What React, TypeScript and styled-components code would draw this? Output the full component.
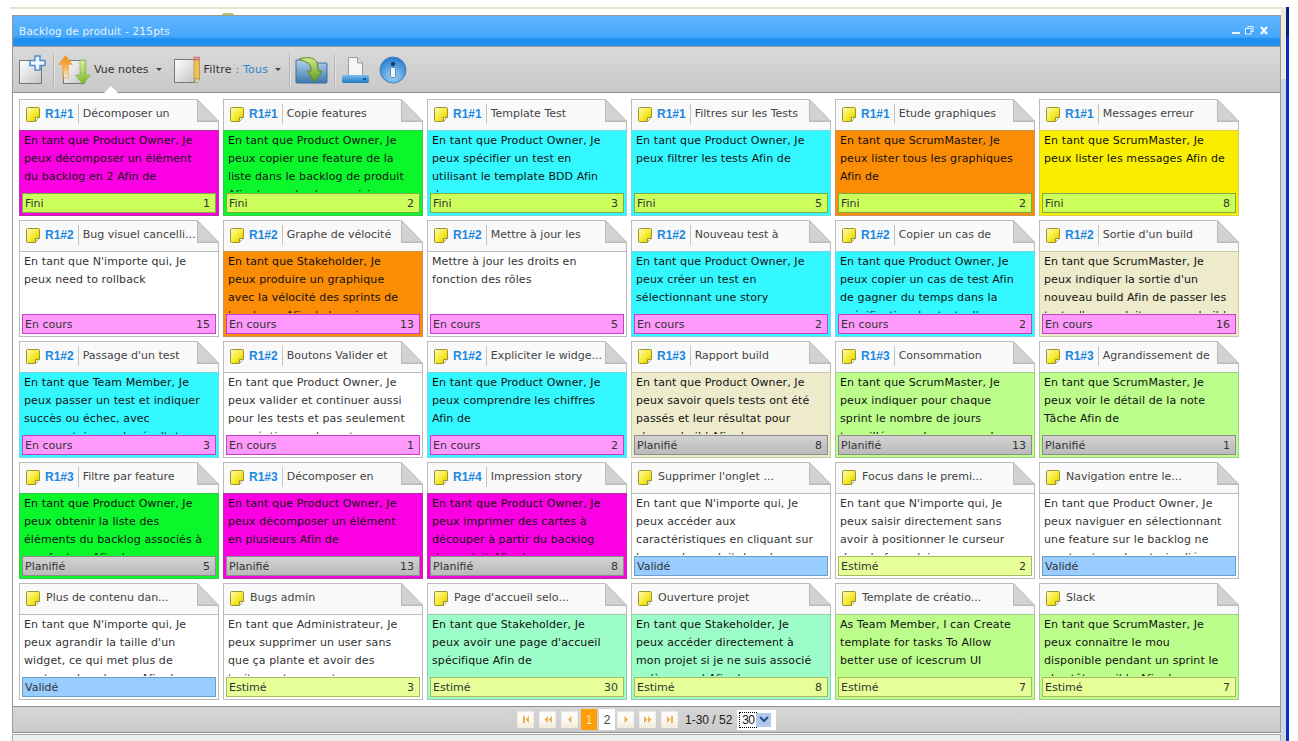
import React from 'react'
import styled, { createGlobalStyle } from 'styled-components'

type Status = 'fini' | 'cours' | 'planifie' | 'valide' | 'estime'
type Story = { id?: string; title: string; color: string; text: string; status: Status; pts?: number }

const FONT = `"DejaVu Sans", Verdana, sans-serif`

const MAGENTA = 'magenta'
const GREEN = 'green'
const CYAN = 'cyan'
const ORANGE = 'orange'
const YELLOW = 'yellow'
const WHITE = 'white'
const BEIGE = 'beige'
const LIME = 'lime'
const MINT = 'mint'

const stickyColors: Record<string, { bg: string; line: string }> = {
  magenta: { bg: '#fc00e4', line: '#b4309f' },
  green: { bg: '#0af72c', line: '#38c84c' },
  cyan: { bg: '#33f8ff', line: '#74d8e8' },
  orange: { bg: '#fb8c06', line: '#c89548' },
  yellow: { bg: '#faee00', line: '#d8d050' },
  white: { bg: '#ffffff', line: '#bbbbbb' },
  beige: { bg: '#edebcc', line: '#c8c8a8' },
  lime: { bg: '#bdfd8c', line: '#a4cc88' },
  mint: { bg: '#9dfdc8', line: '#98ccac' },
}

const statusLabels: Record<Status, string> = {
  fini: 'Fini',
  cours: 'En cours',
  planifie: 'Planifié',
  valide: 'Validé',
  estime: 'Estimé',
}

const statusColors: Record<Status, { bg: string; line: string }> = {
  fini: { bg: '#ccff5c', line: '#7cad45' },
  cours: { bg: '#ff99fb', line: '#c43fc8' },
  planifie: { bg: 'linear-gradient(#d2d2d2, #bababa)', line: '#8c8c8c' },
  valide: { bg: '#99ccff', line: '#6a9fc9' },
  estime: { bg: '#e6ff99', line: '#a9bb62' },
}

const stories: Story[] = [
  { id: 'R1#1', title: 'Décomposer un', color: MAGENTA, status: 'fini', pts: 1, text: 'En tant que Product Owner, Je\npeux décomposer un élément\ndu backlog en 2 Afin de' },
  { id: 'R1#1', title: 'Copie features', color: GREEN, status: 'fini', pts: 2, text: 'En tant que Product Owner, Je\npeux copier une feature de la\nliste dans le backlog de produit\nAfin de ne plus la ressaisir' },
  { id: 'R1#1', title: 'Template Test', color: CYAN, status: 'fini', pts: 3, text: 'En tant que Product Owner, Je\npeux spécifier un test en\nutilisant le template BDD Afin\nde' },
  { id: 'R1#1', title: 'Filtres sur les Tests', color: CYAN, status: 'fini', pts: 5, text: 'En tant que Product Owner, Je\npeux filtrer les tests Afin de' },
  { id: 'R1#1', title: 'Etude graphiques', color: ORANGE, status: 'fini', pts: 2, text: 'En tant que ScrumMaster, Je\npeux lister tous les graphiques\nAfin de' },
  { id: 'R1#1', title: 'Messages erreur', color: YELLOW, status: 'fini', pts: 8, text: 'En tant que ScrumMaster, Je\npeux lister les messages Afin de' },

  { id: 'R1#2', title: 'Bug visuel cancelli...', color: WHITE, status: 'cours', pts: 15, text: "En tant que N'importe qui, Je\npeux need to rollback" },
  { id: 'R1#2', title: 'Graphe de vélocité', color: ORANGE, status: 'cours', pts: 13, text: 'En tant que Stakeholder, Je\npeux produire un graphique\navec la vélocité des sprints de\nla release Afin de la suivre' },
  { id: 'R1#2', title: 'Mettre à jour les', color: WHITE, status: 'cours', pts: 5, text: 'Mettre à jour les droits en\nfonction des rôles' },
  { id: 'R1#2', title: 'Nouveau test à', color: CYAN, status: 'cours', pts: 2, text: 'En tant que Product Owner, Je\npeux créer un test en\nsélectionnant une story' },
  { id: 'R1#2', title: 'Copier un cas de', color: CYAN, status: 'cours', pts: 2, text: "En tant que Product Owner, Je\npeux copier un cas de test Afin\nde gagner du temps dans la\nspécification des tests d'une" },
  { id: 'R1#2', title: "Sortie d'un build", color: BEIGE, status: 'cours', pts: 16, text: "En tant que ScrumMaster, Je\npeux indiquer la sortie d'un\nnouveau build Afin de passer les\ntests d'un produit nouveau build" },

  { id: 'R1#2', title: "Passage d'un test", color: CYAN, status: 'cours', pts: 3, text: 'En tant que Team Member, Je\npeux passer un test et indiquer\nsuccès ou échec, avec\ncommentaire sur le résultat' },
  { id: 'R1#2', title: 'Boutons Valider et', color: WHITE, status: 'cours', pts: 1, text: 'En tant que Product Owner, Je\npeux valider et continuer aussi\npour les tests et pas seulement\nen création sur les notes' },
  { id: 'R1#2', title: 'Expliciter le widge...', color: CYAN, status: 'cours', pts: 2, text: 'En tant que Product Owner, Je\npeux comprendre les chiffres\nAfin de' },
  { id: 'R1#3', title: 'Rapport build', color: BEIGE, status: 'planifie', pts: 8, text: 'En tant que Product Owner, Je\npeux savoir quels tests ont été\npassés et leur résultat pour\nchaque build Afin de' },
  { id: 'R1#3', title: 'Consommation', color: LIME, status: 'planifie', pts: 13, text: 'En tant que ScrumMaster, Je\npeux indiquer pour chaque\nsprint le nombre de jours\ntravaillés par chaque membre' },
  { id: 'R1#3', title: 'Agrandissement de', color: LIME, status: 'planifie', pts: 1, text: 'En tant que ScrumMaster, Je\npeux voir le détail de la note\nTâche Afin de' },

  { id: 'R1#3', title: 'Filtre par feature', color: GREEN, status: 'planifie', pts: 5, text: 'En tant que Product Owner, Je\npeux obtenir la liste des\néléments du backlog associés à\nune feature Afin de' },
  { id: 'R1#3', title: 'Décomposer en', color: MAGENTA, status: 'planifie', pts: 13, text: 'En tant que Product Owner, Je\npeux décomposer un élément\nen plusieurs Afin de' },
  { id: 'R1#4', title: 'Impression story', color: MAGENTA, status: 'planifie', pts: 8, text: 'En tant que Product Owner, Je\npeux imprimer des cartes à\ndécouper à partir du backlog\nde produit Afin de' },
  { title: "Supprimer l'onglet ...", color: WHITE, status: 'valide', text: "En tant que N'importe qui, Je\npeux accéder aux\ncaractéristiques en cliquant sur\nle nom du produit dans la" },
  { title: 'Focus dans le premi...', color: WHITE, status: 'estime', pts: 2, text: "En tant que N'importe qui, Je\npeux saisir directement sans\navoir à positionner le curseur\ndans le formulaire" },
  { title: 'Navigation entre le...', color: WHITE, status: 'valide', text: 'En tant que Product Owner, Je\npeux naviguer en sélectionnant\nune feature sur le backlog ne\nmontrant que les stories liées' },

  { title: 'Plus de contenu dan...', color: WHITE, status: 'valide', text: "En tant que N'importe qui, Je\npeux agrandir la taille d'un\nwidget, ce qui met plus de\ncontenu dans la vue Afin de" },
  { title: 'Bugs admin', color: WHITE, status: 'estime', pts: 3, text: 'En tant que Administrateur, Je\npeux supprimer un user sans\nque ça plante et avoir des\ntraitements corrects' },
  { title: "Page d'accueil selo...", color: MINT, status: 'estime', pts: 30, text: "En tant que Stakeholder, Je\npeux avoir une page d'accueil\nspécifique Afin de" },
  { title: 'Ouverture projet', color: MINT, status: 'estime', pts: 8, text: 'En tant que Stakeholder, Je\npeux accéder directement à\nmon projet si je ne suis associé\nqu’à un seul Afin de' },
  { title: 'Template de créatio...', color: LIME, status: 'estime', pts: 7, text: 'As Team Member, I can Create\ntemplate for tasks To Allow\nbetter use of icescrum UI' },
  { title: 'Slack', color: LIME, status: 'estime', pts: 7, text: 'En tant que ScrumMaster, Je\npeux connaitre le mou\ndisponible pendant un sprint le\nplus tôt possible Afin de' },
]

const GlobalStyle = createGlobalStyle`
  html, body {
    margin: 0;
    padding: 0;
    background: #fff;
    overflow: hidden;
  }
  body {
    font-family: ${FONT};
    font-size: 11px;
  }
`

const Page = styled.div`
  width: 1298px;
  height: 741px;
  display: flex;
  align-items: stretch;
  overflow: hidden;
`

const MainColumn = styled.div`
  width: 1281px;
  display: flex;
  flex-direction: column;
  padding: 7px 0 0 10px;
  box-sizing: border-box;
`

const TopLine = styled.div`
  height: 2px;
  flex: none;
  background: #e6e3cf;
`

const Peek = styled.div`
  height: 6px;
  flex: none;
  display: flex;
  align-items: flex-end;
  padding-left: 212px;
`

const PeekBlob = styled.span`
  width: 12px;
  height: 2px;
  border-radius: 4px 4px 0 0;
  background: #b9c46a;
`

const SideStrip = styled.div`
  width: 5px;
  margin-top: 7px;
  background: linear-gradient(#efeadd 0 72px, #cfd8e2 72px 100%);
`

const BlueEdge = styled.div`
  width: 3px;
  margin-top: 7px;
  background: linear-gradient(#06208c 0 30px, #0a2fc4 30px 100%);
`

const Window = styled.div`
  margin-left: 2px;
  flex: 1;
  min-height: 0;
  display: flex;
  flex-direction: column;
  border: 1px solid #999;
  border-bottom: 0;
  background: #fff;
`

const TitleBar = styled.div`
  height: 30px;
  flex: none;
  display: flex;
  align-items: center;
  justify-content: space-between;
  padding: 0 12px 0 6px;
  background: linear-gradient(#62b6fd 0, #46a7fb 70%, #1d8ff0 76%, #2291f0 100%);
  color: #e4f3ff;
  font-size: 10.5px;
  letter-spacing: 0.2px;
`

const TitleControls = styled.svg`
  display: block;
`

const Toolbar = styled.div`
  position: relative;
  height: 47px;
  flex: none;
  display: flex;
  align-items: center;
  padding-left: 6px;
  box-sizing: border-box;
  border-top: 1px solid #999;
  border-bottom: 1px solid #8a8a8a;
  background: linear-gradient(#d9d9d9, #c9c9c9);
  color: #333;
  font-size: 11px;
`

const ToolSep = styled.span<{ $left: number; $right: number }>`
  width: 1px;
  height: 32px;
  margin: 0 ${(p) => p.$right}px 0 ${(p) => p.$left}px;
  background: #b4b4b4;
  box-shadow: 1px 0 0 #e2e2e2;
`

const ToolLabel = styled.span<{ $gap: number; $track?: number }>`
  margin-left: ${(p) => p.$gap}px;
  letter-spacing: ${(p) => p.$track ?? 0}px;
  white-space: nowrap;
`

const TousLabel = styled.span`
  color: #2b86cf;
`

const Caret = styled.span<{ $gap: number; $after: number }>`
  width: 0;
  height: 0;
  margin: 0 ${(p) => p.$after}px 0 ${(p) => p.$gap}px;
  border-left: 3px solid transparent;
  border-right: 3px solid transparent;
  border-top: 3px solid #444;
`

const Notch = styled.span`
  position: absolute;
  left: 91px;
  bottom: -1px;
  width: 0;
  height: 0;
  border-left: 7px solid transparent;
  border-right: 7px solid transparent;
  border-bottom: 7px solid #fff;
`

const ToolIconBox = styled.svg<{ $left?: number }>`
  flex: none;
  display: block;
  margin-left: ${(p) => p.$left ?? 0}px;
`

const Board = styled.div`
  flex: 1;
  min-height: 0;
  display: grid;
  grid-template-columns: repeat(6, 200px);
  grid-auto-rows: 117px;
  column-gap: 4px;
  row-gap: 4px;
  padding: 6px 0 0 6px;
  align-content: start;
  background: #fff;
`

const Card = styled.div`
  position: relative;
  display: flex;
  flex-direction: column;
  min-width: 0;
`

const CardHead = styled.div`
  height: 31px;
  flex: none;
  display: flex;
  align-items: center;
  padding: 0 0 2px 6px;
  box-sizing: border-box;
  border: 1px solid #bbb;
  border-bottom: 0;
  background: #f9f9f9;
`

const Fold = styled.svg`
  position: absolute;
  top: 0;
  right: 0;
  display: block;
`

const NoteIcon = styled.svg`
  flex: none;
  display: block;
`

const StoryId = styled.span`
  margin-left: 5px;
  padding-bottom: 1px;
  color: #1a87e0;
  font-family: "Liberation Sans", Arial, sans-serif;
  font-weight: bold;
  font-size: 12px;
  white-space: nowrap;
`

const HeadSep = styled.span`
  width: 1px;
  height: 20px;
  margin: 0 4px 0 4px;
  background: #c4c4c4;
`

const StoryTitle = styled.span<{ $plain: boolean }>`
  margin-left: ${(p) => (p.$plain ? 6 : 0)}px;
  padding-bottom: 2px;
  color: #444;
  font-size: 11px;
  white-space: nowrap;
`

const CardBody = styled.div<{ $color: string }>`
  flex: 1;
  min-height: 0;
  display: flex;
  flex-direction: column;
  box-sizing: border-box;
  border: 1px solid ${(p) => stickyColors[p.$color].line};
  background: ${(p) => stickyColors[p.$color].bg};
  color: ${(p) => (p.$color === 'white' ? '#333' : '#111')};
`

const Desc = styled.div`
  height: 61px;
  flex: none;
  margin-bottom: 1px;
  padding: 1px 0 0 4px;
  box-sizing: border-box;
  overflow: hidden;
  font-size: 11px;
  line-height: 18px;
  letter-spacing: 0.1px;
  white-space: pre;
`

const StatusBar = styled.div<{ $status: Status }>`
  height: 20px;
  flex: none;
  margin: 0 2px;
  display: flex;
  align-items: center;
  justify-content: space-between;
  padding: 0 5px 0 2px;
  box-sizing: border-box;
  border: 1px solid ${(p) => statusColors[p.$status].line};
  background: ${(p) => statusColors[p.$status].bg};
  color: #333;
  font-size: 11px;
`

const Pager = styled.div`
  height: 27px;
  flex: none;
  display: flex;
  align-items: center;
  padding-left: 504px;
  box-sizing: border-box;
  border-top: 1px solid #8f8f8f;
  border-bottom: 1px solid #8f8f8f;
  background: linear-gradient(#d6d6d6, #cbcbcb);
`

const PageArrow = styled.span<{ $after?: number }>`
  width: 17px;
  height: 17px;
  flex: none;
  margin-right: ${(p) => p.$after ?? 5}px;
  display: flex;
  align-items: center;
  justify-content: center;
  box-sizing: border-box;
  border: 1px dotted #e6dfd2;
  background: linear-gradient(#fdfbf8 50%, #f3ead9 100%);
`

const PageNum = styled.span<{ $active?: boolean }>`
  width: 16px;
  height: 21px;
  flex: none;
  margin-right: 2px;
  display: flex;
  align-items: center;
  justify-content: center;
  font-family: "Liberation Sans", Arial, sans-serif;
  font-size: 12px;
  background: ${(p) => (p.$active ? '#ff9f05' : '#fff')};
  color: ${(p) => (p.$active ? '#ffe7b0' : '#444')};
`

const PageInfo = styled.span`
  margin: 0 5px 0 3px;
  font-family: "Liberation Sans", Arial, sans-serif;
  font-size: 12px;
  color: #222;
  white-space: nowrap;
`

const PageSize = styled.div`
  width: 39px;
  height: 20px;
  flex: none;
  display: flex;
  align-items: center;
  padding-left: 3px;
  box-sizing: border-box;
  background: #fff;
`

const PageSizeValue = styled.span`
  width: 16px;
  height: 14px;
  line-height: 14px;
  outline: 1px dotted #000;
  font-family: "Liberation Sans", Arial, sans-serif;
  font-size: 12px;
  letter-spacing: -0.5px;
  color: #111;
  text-align: center;
`

const PageSizeButton = styled.span`
  width: 15px;
  height: 14px;
  flex: none;
  display: flex;
  align-items: center;
  justify-content: center;
  background: #b4c8ee;
`

const BottomGap = styled.div`
  height: 1px;
  flex: none;
  background: #fff;
`

const StatusStrip = styled.div`
  margin-left: 2px;
  flex: none;
  height: 7px;
  box-sizing: border-box;
  border: 1px solid #aaa;
  border-bottom: 0;
  background: #eee;
`

const NoteGlyph = () => (
  <NoteIcon width="14" height="15" viewBox="0 0 14 15">
    <defs>
      <linearGradient id="noteFill" x1="0" y1="0" x2="1" y2="1">
        <stop offset="0" stopColor="#fdf9c0" />
        <stop offset="0.55" stopColor="#f7ea2a" />
        <stop offset="1" stopColor="#d5c400" />
      </linearGradient>
    </defs>
    <path d="M1.5.5h11a1 1 0 0 1 1 1V10l-4 4.500h-8a1 1 0 0 1-1-1V1.500a1 1 0 0 1 1-1z" fill="url(#noteFill)" stroke="#9a9434" />
    <path d="M9.500 14V10.500h4" fill="#eee" stroke="#9a9434" />
  </NoteIcon>
)

const CornerFold = () => (
  <Fold width="22" height="23" viewBox="0 0 22 23">
    <polygon points="0,0 22,0 22,23" fill="#fff" />
    <polygon points="0.500,0.500 0.500,22 21.500,22" fill="#d2d2d2" stroke="#bbb" />
    <rect x="0" y="22" width="22" height="1" fill="#bbb" />
  </Fold>
)

const AddIcon = () => (
  <ToolIconBox width="27" height="29" viewBox="0 0 27 29">
    <defs>
      <linearGradient id="pageFill" x1="0" y1="0" x2="1" y2="1">
        <stop offset="0" stopColor="#ffffff" />
        <stop offset="1" stopColor="#c4c4c4" />
      </linearGradient>
    </defs>
    <rect x="0.500" y="5.500" width="22" height="23" fill="url(#pageFill)" stroke="#777" />
    <path d="M16 1h5v4.500h5v5h-5V15h-5v-4.500h-5v-5h5z" fill="#eef7ff" stroke="#4f8fc8" strokeWidth="1.500" />
  </ToolIconBox>
)

const SortIcon = () => (
  <ToolIconBox $left={0} width="33" height="30" viewBox="0 0 33 30">
    <defs>
      <linearGradient id="upFill" x1="0" y1="0" x2="0" y2="1">
        <stop offset="0" stopColor="#f08a10" />
        <stop offset="0.6" stopColor="#f8b860" />
        <stop offset="1" stopColor="#f8dcb4" stopOpacity="0.3" />
      </linearGradient>
      <linearGradient id="downFill" x1="0" y1="0" x2="0" y2="1">
        <stop offset="0" stopColor="#d8f090" stopOpacity="0.7" />
        <stop offset="1" stopColor="#70b820" />
      </linearGradient>
    </defs>
    <rect x="5.500" y="5.500" width="21" height="23" fill="url(#pageFill)" stroke="#777" />
    <path d="M7.500 0.500l7 9h-4V23h-6V9.500h-4z" fill="url(#upFill)" stroke="#e89a40" strokeWidth="0.600" />
    <path d="M22 5h6v15h4.500l-7.500 9.500-7.500-9.500H22z" fill="url(#downFill)" stroke="#7ab030" strokeWidth="0.600" />
  </ToolIconBox>
)

const FilterIcon = () => (
  <ToolIconBox width="26" height="28" viewBox="0 0 26 28">
    <rect x="0.500" y="3.500" width="20" height="23" fill="url(#pageFill)" stroke="#777" />
    <rect x="20" y="1" width="5.500" height="3" fill="#e58c9c" stroke="#b06a70" strokeWidth="0.500" />
    <rect x="20" y="4" width="5.500" height="19" fill="#f0c050" stroke="#a87c20" strokeWidth="0.600" />
    <path d="M20 23h5.500l-2.700 4.800z" fill="#f0dcb0" stroke="#8a7040" strokeWidth="0.500" />
  </ToolIconBox>
)

const FolderIcon = () => (
  <ToolIconBox $left={1} width="33" height="28" viewBox="0 0 33 28">
    <defs>
      <linearGradient id="folderFill" x1="0" y1="0" x2="0" y2="1">
        <stop offset="0" stopColor="#b8d2ea" />
        <stop offset="1" stopColor="#3a78b0" />
      </linearGradient>
      <linearGradient id="bendFill" x1="0" y1="0" x2="0" y2="1">
        <stop offset="0" stopColor="#d4e890" />
        <stop offset="1" stopColor="#5a9a18" />
      </linearGradient>
    </defs>
    <path d="M1 7V4h10l2 3h18a1 1 0 0 1 1 1v18a1 1 0 0 1-1 1H2a1 1 0 0 1-1-1z" fill="url(#folderFill)" stroke="#3c6c98" />
    <path d="M4 3c7-2 14-2 17 2 2 3 2 7 2 10h4l-7.500 11L12 15h4c0-3 0-5-2-7-2-2-6-3-10-5z" fill="url(#bendFill)" stroke="#5c8a20" />
  </ToolIconBox>
)

const DocIcon = () => (
  <ToolIconBox width="27" height="26" viewBox="0 0 27 26">
    <defs>
      <linearGradient id="barFill" x1="0" y1="0" x2="0" y2="1">
        <stop offset="0" stopColor="#7cc0f0" />
        <stop offset="1" stopColor="#1c78c0" />
      </linearGradient>
    </defs>
    <path d="M6.500 0.500h9l5 5.500V19h-14z" fill="#f6f6f6" stroke="#9a9a9a" />
    <path d="M15.500.5V6h5" fill="#dcdcdc" stroke="#9a9a9a" />
    <rect x="0" y="18" width="27" height="8" rx="2" fill="url(#barFill)" />
    <rect x="21" y="21" width="3" height="2" fill="#0f5a98" />
  </ToolIconBox>
)

const InfoIcon = () => (
  <ToolIconBox $left={10} width="28" height="28" viewBox="0 0 28 28">
    <defs>
      <radialGradient id="infoFill" cx="0.5" cy="0.75" r="0.7">
        <stop offset="0" stopColor="#9ed2f8" />
        <stop offset="1" stopColor="#2a7fd0" />
      </radialGradient>
    </defs>
    <circle cx="14" cy="14" r="13" fill="url(#infoFill)" stroke="#3f82bc" />
    <circle cx="14" cy="8" r="2.200" fill="#16406c" />
    <rect x="11.500" y="11.500" width="5" height="10" rx="1" fill="#f4f8fc" stroke="#16406c" strokeWidth="0.500" />
  </ToolIconBox>
)

const WindowControls = () => (
  <TitleControls width="36" height="10" viewBox="0 0 36 10">
    <rect x="0" y="6" width="8" height="2" fill="#e8f4ff" />
    <rect x="16" y="0.500" width="5" height="5" fill="none" stroke="#e8f4ff" />
    <rect x="13.500" y="2.500" width="5.500" height="5.500" fill="#3d9ff5" stroke="#e8f4ff" />
    <path d="M29 1l6 7M35 1l-6 7" stroke="#f4faff" strokeWidth="2.200" />
  </TitleControls>
)

type ArrowKind = 'first' | 'prevAll' | 'prev' | 'next' | 'nextAll' | 'last'

const arrowPaths: Record<ArrowKind, string> = {
  first: 'M2 1h2v7H2zM8 1v7L4.500 4.500z',
  prevAll: 'M5 1v7L1.500 4.500zM9 1v7L5.500 4.500z',
  prev: 'M6.500 1v7L3 4.500z',
  next: 'M3.500 1v7L7 4.500z',
  nextAll: 'M1 1v7l3.500-3.500zM5 1v7l3.500-3.500z',
  last: 'M2 1v7l3.500-3.500zM6 1h2v7H6z',
}

const PagerArrow = ({ kind, after }: { kind: ArrowKind; after?: number }) => (
  <PageArrow $after={after}>
    <svg width="10" height="9" viewBox="0 0 10 9">
      <path d={arrowPaths[kind]} fill="#f0ae55" />
    </svg>
  </PageArrow>
)

const StoryCard = ({ story }: { story: Story }) => (
  <Card>
    <CardHead>
      <NoteGlyph />
      {story.id && <StoryId>{story.id}</StoryId>}
      {story.id && <HeadSep />}
      <StoryTitle $plain={!story.id}>{story.title}</StoryTitle>
    </CardHead>
    <CornerFold />
    <CardBody $color={story.color}>
      <Desc>{story.text}</Desc>
      <StatusBar $status={story.status}>
        <span>{statusLabels[story.status]}</span>
        {story.pts !== undefined && <span>{story.pts}</span>}
      </StatusBar>
    </CardBody>
  </Card>
)

export default function App() {
  return (
    <Page>
      <GlobalStyle />
      <MainColumn>
        <TopLine />
        <Peek>
          <PeekBlob />
        </Peek>
        <Window>
          <TitleBar>
            <span>Backlog de produit - 215pts</span>
            <WindowControls />
          </TitleBar>
          <Toolbar>
            <AddIcon />
            <ToolSep $left={7} $right={4} />
            <SortIcon />
            <ToolLabel $gap={3}>Vue notes</ToolLabel>
            <Caret $gap={7} $after={12} />
            <FilterIcon />
            <ToolLabel $gap={4} $track={0.2}>
              Filtre <TousLabel>: Tous</TousLabel>
            </ToolLabel>
            <Caret $gap={7} $after={8} />
            <ToolSep $left={0} $right={4} />
            <FolderIcon />
            <ToolSep $left={6} $right={7} />
            <DocIcon />
            <InfoIcon />
            <Notch />
          </Toolbar>
          <Board>
            {stories.map((s, i) => (
              <StoryCard key={i} story={s} />
            ))}
          </Board>
          <Pager>
            <PagerArrow kind="first" />
            <PagerArrow kind="prevAll" />
            <PagerArrow kind="prev" after={3} />
            <PageNum $active>1</PageNum>
            <PageNum>2</PageNum>
            <PagerArrow kind="next" />
            <PagerArrow kind="nextAll" />
            <PagerArrow kind="last" after={4} />
            <PageInfo>1-30 / 52</PageInfo>
            <PageSize>
              <PageSizeValue>30</PageSizeValue>
              <PageSizeButton>
                <svg width="10" height="7" viewBox="0 0 10 7">
                  <path d="M1 1l4 4 4-4" fill="none" stroke="#21508c" strokeWidth="2" />
                </svg>
              </PageSizeButton>
            </PageSize>
          </Pager>
        </Window>
        <BottomGap />
        <StatusStrip />
      </MainColumn>
      <SideStrip />
      <BlueEdge />
    </Page>
  )
}
